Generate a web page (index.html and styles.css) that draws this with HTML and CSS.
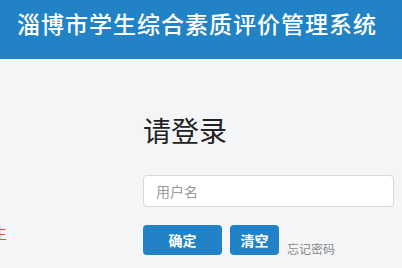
FILE: index.html
```html
<!DOCTYPE html>
<html lang="zh-CN">
<head>
<meta charset="utf-8">
<title>淄博市学生综合素质评价管理系统</title>
<link rel="stylesheet" href="styles.css">
</head>
<body>
<header class="topbar">
  <h1 class="site-title">淄博市学生综合素质评价管理系统</h1>
</header>
<main class="content">
  <aside class="intro">
    <p class="intro-text">学生</p>
  </aside>
  <section class="login">
    <h2 class="login-title">请登录</h2>
    <input class="field" type="text" placeholder="用户名">
    <div class="actions">
      <button class="btn btn-wide" type="button">确定</button>
      <button class="btn btn-small" type="button">清空</button>
      <a class="forgot" href="#">忘记密码</a>
    </div>
  </section>
</main>
</body>
</html>
```

FILE: styles.css
```css
html, body {
  margin: 0;
  padding: 0;
}
body {
  background: #f4f5f7;
  font-family: "Noto Sans CJK SC", "Noto Sans", sans-serif;
  width: 402px;
  height: 268px;
  overflow: hidden;
}
.topbar {
  background: #2183c5;
  height: 59px;
  box-sizing: border-box;
  padding: 8px 0 0 17px;
}
.site-title {
  margin: 0;
  font-size: 23px;
  line-height: 30px;
  font-weight: 500;
  color: #ffffff;
  white-space: nowrap;
  letter-spacing: 1px;
}
.content {
  display: flex;
}
.intro {
  width: 143px;
  flex: none;
  display: flex;
  justify-content: flex-end;
}
.intro-text {
  margin: 165px 136px 0 0;
  font-size: 15px;
  line-height: 17px;
  color: #e2572a;
  white-space: nowrap;
}
.login {
  width: 251px;
  flex: none;
  padding-top: 56px;
}
.login-title {
  margin: 0;
  font-size: 28px;
  line-height: 31px;
  font-weight: 400;
  color: #222222;
}
.field {
  display: block;
  box-sizing: border-box;
  width: 251px;
  height: 32px;
  margin-top: 29px;
  padding: 0 12px;
  border: 1px solid #d9d9d9;
  border-radius: 4px;
  background: #ffffff;
  font-family: inherit;
  font-size: 14px;
  color: #555555;
  outline: none;
}
.field::placeholder {
  color: #9a9a9a;
}
.actions {
  display: flex;
  align-items: flex-end;
  margin-top: 18px;
}
.btn {
  height: 30px;
  border: none;
  border-radius: 4px;
  background: #2183c5;
  color: #ffffff;
  font-family: inherit;
  font-size: 14px;
  font-weight: 700;
  padding: 0;
}
.btn-wide {
  width: 79px;
}
.btn-small {
  width: 49px;
  margin-left: 8px;
}
.forgot {
  margin-left: 8px;
  font-size: 12px;
  line-height: 14px;
  color: #8a8a8a;
  text-decoration: none;
  margin-bottom: -1px;
}
```
